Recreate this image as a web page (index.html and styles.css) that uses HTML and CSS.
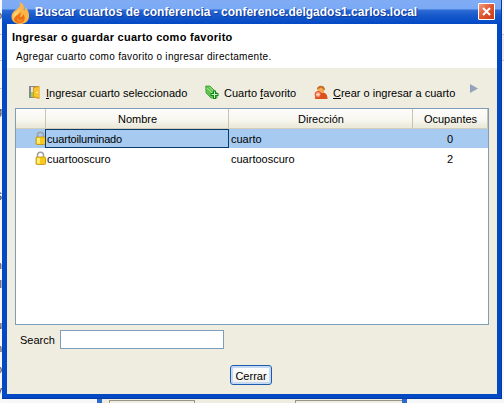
FILE: index.html
```html
<!DOCTYPE html>
<html lang="es">
<head>
<meta charset="utf-8">
<title>Buscar cuartos de conferencia</title>
<link rel="stylesheet" href="styles.css">
</head>
<body>
<div class="desktop">
  <div class="behind-left">
    <i class="rule r1"></i><i class="rule r2"></i><i class="rule r3"></i>
    <span class="frag f1">o</span><span class="frag f2">g</span><span class="frag f3">S</span><span class="frag f4">m</span><span class="frag f5">l</span><span class="frag f6">u</span><span class="frag f7">n</span><span class="frag f8">o</span><span class="frag f9">v</span>
  </div>
  <div class="behind-right"></div>
  <div class="behind-bottom"><i class="field a"></i><i class="field b"></i></div>

  <section class="window">
    <header class="titlebar">
      <svg class="flame" width="19" height="22" viewBox="0 0 19 22">
        <path d="M8.500 0C13 2 13.500 5 12.500 8C14.500 8 14.500 6 13.500 4.500C17 7 18.500 11 18 15C17.500 19.500 14 22 9 22C4 22 .5 19 .5 15C.5 11 3 9 6 7C9 5 9.500 3 8.500 0Z" fill="#fcb648"/>
        <path d="M9 3C11 8 5 9 3 12C1.500 15 3 17 3 17C4 12 11 10 9 3Z" fill="#ffd27c"/>
        <path d="M9 10C11 12 9 13 9 15C11 15 12 14 12 12C15 15 14 21 9 21C5 21 3 19 3 17C4 13 9 13 9 10Z" fill="#ee7012"/>
        <path d="M7 16C5 18 6 20 9 20C11 20 12 19 12 17C10 19 8 18 7 16Z" fill="#f58a26"/>
      </svg>
      <h1><span>Buscar cuartos de conferencia - conference.delgados1.carlos.local</span></h1>
      <button class="close" aria-label="Cerrar ventana">
        <svg width="9" height="9" viewBox="0 0 9 9"><path d="M1 1L8 8M8 1L1 8" stroke="#fff" stroke-width="2"/></svg>
      </button>
    </header>
    <div class="banner">
      <h2><span>Ingresar o guardar cuarto como favorito</span></h2>
      <p><span>Agregar cuarto como favorito o ingresar directamente.</span></p>
    </div>
    <main class="content">
      <nav class="toolbar">
        <a class="tool one">
          <svg width="12" height="15" viewBox="0 0 12 15"><path d="M0 1H10V13H0Z" fill="#85888c"/><path d="M2 2H4V7H2Z" fill="#dfe8ee"/><path d="M2 7H4V12H2Z" fill="#91d65b"/><path d="M4 2L10.500 1V14L4 12.500Z" fill="#dc9c12"/><path d="M5 3L10 2V12.500L5 11.500Z" fill="#fcc42c"/><path d="M7 7H9V8H7Z" fill="#fff6b8"/></svg>
          <span><u>I</u>ngresar cuarto seleccionado</span>
        </a>
        <a class="tool two">
          <svg width="14" height="15" viewBox="0 0 14 15"><path d="M.7 1L5 1L12 8V13H6L1 8Z" fill="#5fc350" stroke="#3d9c38" stroke-width=".8"/><path d="M2 3L8 9M4.500 2L10 8" stroke="#a5e892"/><path d="M8 5.500H11V8H13.500V11H11V14H8V11H5.500V8H8Z" fill="#168521"/><path d="M9 6.500H10V9H12.500V10H10V13H9V10H6.500V9H9Z" fill="#c9ffc0"/></svg>
          <span>Cuarto <u>f</u>avorito</span>
        </a>
        <a class="tool three">
          <svg width="14" height="15" viewBox="0 0 14 15"><path d="M1 14C1 9 4 7.500 8 7.500C12 7.500 13.500 10 13.500 14Z" fill="#d9531b"/><circle cx="7" cy="4.500" r="3.500" fill="#f3ab58"/><path d="M3 4.500C2.500 0 11 -1 11 5C9 5 8.500 3 7 2.500C5.500 3 4.500 4 3 4.500Z" fill="#c56a24"/><circle cx="4" cy="9.500" r="3" fill="#ff9b75" stroke="#e2492a"/><path d="M4 8V11M2.500 9.500H5.500" stroke="#ffe0c8"/></svg>
          <span><u>C</u>rear o ingresar a cuarto</span>
        </a>
        <svg class="more" width="8" height="10" viewBox="0 0 8 10"><path d="M0 0L8 4.500L0 9Z" fill="#94a2bd"/></svg>
      </nav>
      <div class="table">
        <div class="row head"><b></b><b><span>Nombre</span></b><b><span>Dirección</span></b><b><span>Ocupantes</span></b></div>
        <div class="row selected"><b class="lock"><svg width="11" height="14" viewBox="0 0 11 14"><path d="M2.500 7V4C2.500 .2 8.500 .2 8.500 4V7" fill="none" stroke="#9f9f9f" stroke-width="1.500"/><rect x="1" y="6" width="9.500" height="7.500" rx="1" fill="#f8c81c" stroke="#c08d08" stroke-width=".8"/><path d="M2 7H5V12.500H2Z" fill="#fff07a"/></svg></b><b class="focus"><span>cuartoiluminado</span></b><b class="dir"><span>cuarto</span></b><b class="num">0</b></div>
        <div class="row"><b class="lock"><svg width="11" height="14" viewBox="0 0 11 14"><path d="M2.500 7V4C2.500 .2 8.500 .2 8.500 4V7" fill="none" stroke="#9f9f9f" stroke-width="1.500"/><rect x="1" y="6" width="9.500" height="7.500" rx="1" fill="#f8c81c" stroke="#c08d08" stroke-width=".8"/><path d="M2 7H5V12.500H2Z" fill="#fff07a"/></svg></b><b><span>cuartooscuro</span></b><b class="dir"><span>cuartooscuro</span></b><b class="num">2</b></div>
      </div>
      <div class="search"><label for="q"><span>Search</span></label><input id="q" type="text"></div>
      <div class="actions"><button class="ok"><span>Cerrar</span></button></div>
    </main>
  </section>
</div>
</body>
</html>
```
FILE: styles.css
```css
* { box-sizing: border-box; }
body { margin: 0; overflow: hidden; font: 11px/14px "Liberation Sans", Arial, sans-serif; color: #000; }
h1, h2, p { margin: 0; }
svg { display: block; flex: none; }
span { white-space: nowrap; }
.desktop { position: relative; width: 504px; height: 403px; overflow: hidden; background: #f7f7f7; }
.behind-left { position: absolute; left: 0; top: 0; width: 2px; height: 403px; overflow: hidden; background: #f8f8fa; }
.rule { position: absolute; left: 0; width: 2px; height: 1px; background: #c9c9cf; }
.r1 { top: 34px; } .r2 { top: 60px; } .r3 { top: 88px; }
.frag { position: absolute; right: 0; font-size: 11px; color: #333; }
.f1 { top: 8px; } .f2 { top: 104px; } .f3 { top: 189px; } .f4 { top: 258px; } .f5 { top: 277px; }
.f6 { top: 318px; } .f7 { top: 341px; } .f8 { top: 362px; } .f9 { top: 383px; }
.behind-right { position: absolute; left: 502px; top: 34px; width: 2px; height: 27px; background: #ececee; border: solid #c9c9cf; border-width: 1px 0; }
.behind-bottom { position: absolute; left: 97px; top: 398px; width: 310px; height: 5px; background: #efede0; border: solid #2f6ad0; border-width: 0 5px; }
.field { position: absolute; top: 2px; height: 8px; border: 1px solid #96968e; }
.field.a { left: 7px; width: 86px; }
.field.b { left: 193px; width: 107px; border-right: 0; }

.window { position: relative; margin-left: 2px; width: 500px; height: 399px; display: flex; flex-direction: column; background: #0349c4; border-bottom: 1px solid #003aa6; border-right: 1px solid #003aa6; }
.titlebar { height: 24px; flex: none; display: flex; padding-left: 9px; background: linear-gradient(#80acf4 0, #7aa9f5 9px, #2e6bd5 10px, #1558cb 16px, #0349c4 24px); }
.flame { margin: 2px 1px 0 0; position: relative; z-index: 1; }
h1 { flex: 1; margin: 4px 0 0 4px; font-size: 12px; line-height: 16px; color: #fff; text-shadow: 1px 1px 0 #12399a; }
.close { width: 17px; height: 17px; margin: 3px 6px 0 0; padding: 0; display: grid; place-items: center; border: 1px solid #fff; border-radius: 1px; background: linear-gradient(135deg, #f09a80, #df5530 50%, #c83c16); }
.banner { height: 44px; flex: none; margin: 0 4px 0 5px; background: #fff; padding: 5px 0 0 5px; }
h2 { font-size: 11px; line-height: 16px; letter-spacing: .28px; }
.banner p { margin: 5px 0 0 4px; line-height: 14px; font-size: 10px; letter-spacing: .3px; }
.content { height: 326px; margin: 0 4px 0 5px; padding: 15px 8px 0; background: #efede0; display: flex; flex-direction: column; }
.toolbar { display: flex; height: 25px; flex: none; }
.tool { display: flex; align-items: flex-start; }
.tool svg { margin-top: 2px; }
.tool span { margin-top: 3px; }
.tool.one { width: 176px; padding-left: 14px; gap: 5px; }
.tool.two { width: 108px; padding-left: 14px; gap: 5px; }
.tool.three { width: 171px; padding-left: 15px; gap: 5px; }
.more { margin-top: 1px; }
u { text-decoration: underline; text-underline-offset: 1px; }
.table { width: 474px; height: 217px; flex: none; background: #fff; border: 1px solid #7f9db9; }
.row { display: grid; grid-template-columns: 30px 183px 184px 75px; height: 19px; margin-bottom: 1px; }
.row b { font-weight: normal; padding: 3px 0 0 1px; line-height: 14px; }
.row.head { height: 20px; margin: 0; background: linear-gradient(#fdfdfb, #f7f6ef 60%, #ebeadb 90%); border-bottom: 1px solid #d0cdbb; }
.row.head b { border-right: 1px solid #c7c5b2; text-align: center; padding: 3px 0 0 1px; }
.row.selected { background: #a6caf0; }
.row .focus { border: 1px solid #0a3a6c; margin-left: -1px; padding: 2px 0 0 1px; letter-spacing: -.18px; }
.row .dir { padding-left: 2px; }
.row .lock { display: flex; justify-content: flex-end; padding: 2px 0 0; }
.row .num { padding-left: 0; padding-right: 1px; text-align: center; }
.search { display: flex; height: 19px; margin: 5px 0 0 5px; flex: none; }
.search label { width: 40px; padding-top: 3px; }
.search input { width: 164px; height: 19px; border: 1px solid #7f9db9; background: #fff; padding: 0 3px; font: inherit; outline: 0; }
.actions { display: flex; justify-content: center; margin-top: 16px; padding-right: 2px; }
.ok { width: 42px; height: 20px; padding: 1px 0 0; font: inherit; line-height: 14px; border: 1px solid #1c5cae; border-radius: 3px; background: linear-gradient(#fff, #f1f0ea); box-shadow: inset 0 0 0 2px #c5d9f5; }
```
